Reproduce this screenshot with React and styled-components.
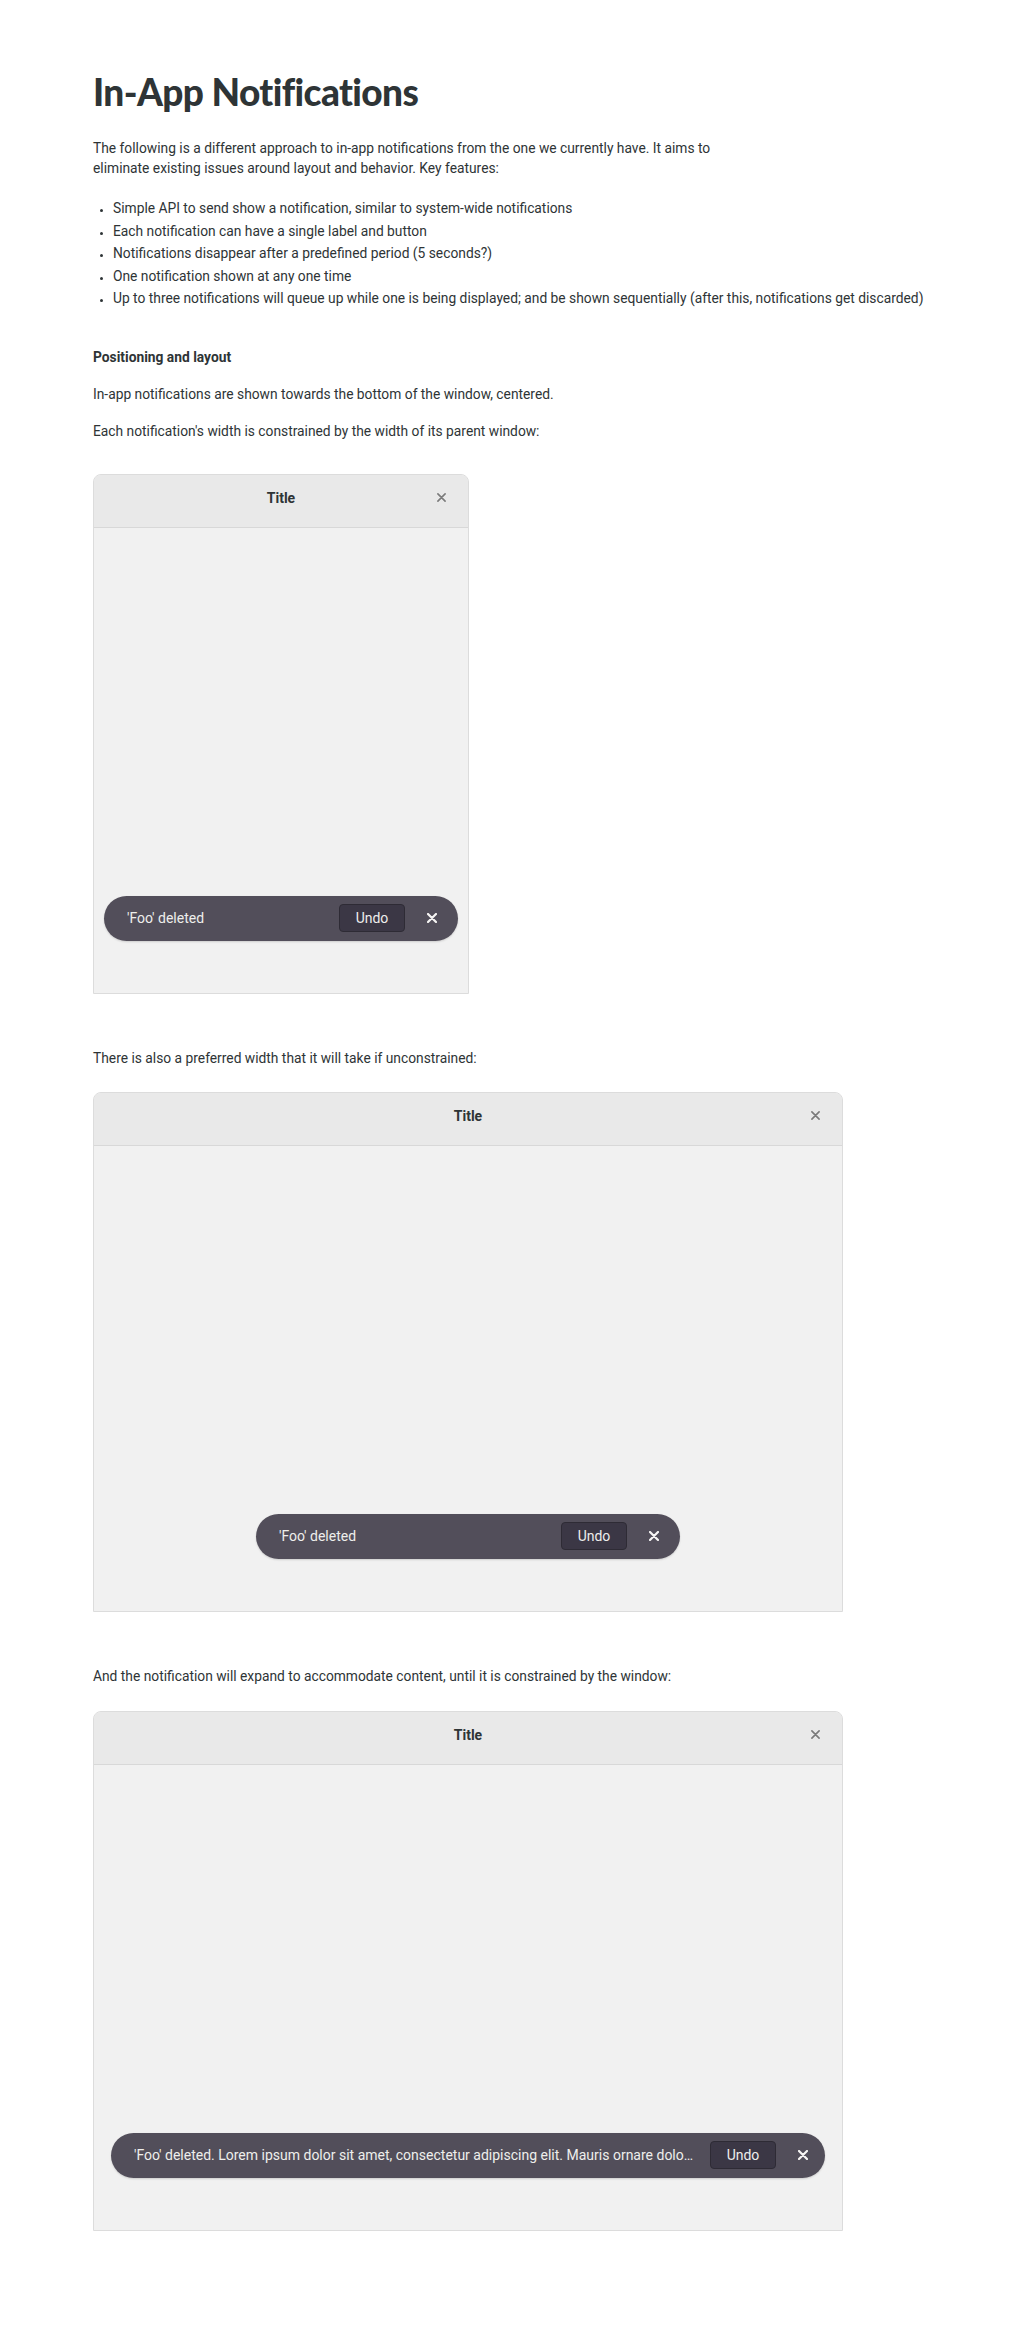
import React from 'react';
import styled, { createGlobalStyle } from 'styled-components';

const GlobalStyle = createGlobalStyle`
  html, body {
    margin: 0;
    padding: 0;
    background: #ffffff;
  }
  body {
    font-family: Roboto, "Liberation Sans", sans-serif;
    color: #2e3436;
  }
`;

const features = [
    'Simple API to send show a notification, similar to system-wide notifications',
    'Each notification can have a single label and button',
    'Notifications disappear after a predefined period (5 seconds?)',
    'One notification shown at any one time',
    'Up to three notifications will queue up while one is being displayed; and be shown sequentially (after this, notifications get discarded)',
];

const CloseIcon = ({ size = 9, color = 'currentColor', stroke = 1.8 }) => (
    <svg width={size} height={size} viewBox="0 0 10 10" fill="none">
        <path d="M1 1 L9 9 M9 1 L1 9" stroke={color} strokeWidth={stroke} strokeLinecap="round" />
    </svg>
);

const Toast = ({ label, width, inset, padRight = 21 }) => (
    <ToastPill $width={width} $inset={inset} $padRight={padRight}>
        <ToastLabel>{label}</ToastLabel>
        <UndoButton>Undo</UndoButton>
        <ToastClose>
            <CloseIcon size={10} color="#f6f5f4" stroke={2.2} />
        </ToastClose>
    </ToastPill>
);

const FakeWindow = ({ width, toast }) => (
    <WindowFrame $width={width}>
        <TitleBar>
            <TitleText>Title</TitleText>
            <TitleClose>
                <CloseIcon size={9} color="#7b7b7b" stroke={1.8} />
            </TitleClose>
        </TitleBar>
        <WindowBody>{toast}</WindowBody>
    </WindowFrame>
);

const App = () => {
    return (
        <Page>
            <GlobalStyle />
            <Heading>In-App Notifications</Heading>

            <Intro>
                The following is a different approach to in-app notifications from the one we currently have. It aims to
                <br />
                eliminate existing issues around layout and behavior. Key features:
            </Intro>

            <FeatureList>
                {features.map((f) => (
                    <FeatureItem key={f}>{f}</FeatureItem>
                ))}
            </FeatureList>

            <SubHeading>Positioning and layout</SubHeading>
            <Text>In-app notifications are shown towards the bottom of the window, centered.</Text>
            <Text>Each notification's width is constrained by the width of its parent window:</Text>

            <Figure $top={33}>
                <FakeWindow width={376} toast={<Toast label="'Foo' deleted" inset={10} />} />
            </Figure>

            <Text $top={0}>There is also a preferred width that it will take if unconstrained:</Text>

            <Figure $top={24}>
                <FakeWindow width={750} toast={<Toast label="'Foo' deleted" width={424} />} />
            </Figure>

            <Text $top={0}>And the notification will expand to accommodate content, until it is constrained by the window:</Text>

            <Figure $top={25} $last>
                <FakeWindow
                    width={750}
                    toast={
                        <Toast
                            label="'Foo' deleted. Lorem ipsum dolor sit amet, consectetur adipiscing elit. Mauris ornare dolor sit amet, consectetur adipiscing"
                            inset={17}
                            padRight={17}
                        />
                    }
                />
            </Figure>
        </Page>
    );
};

export default App;

const Page = styled.div`
    padding: 70px 40px 94px 93px;
    font-size: 13.8px;
    line-height: 20px;
`;

const Heading = styled.h1`
    margin: 0;
    font-family: Lato, "Open Sans", sans-serif;
    font-weight: 900;
    font-size: 37px;
    line-height: 44px;
    letter-spacing: -0.6px;
    color: #2e3436;
`;

const Intro = styled.p`
    margin: 24px 0 0;
`;

const FeatureList = styled.ul`
    margin: 19px 0 0;
    padding-left: 20px;
    list-style: disc;
`;

const FeatureItem = styled.li`
    line-height: 22.5px;
    &::marker {
        font-size: 11px;
    }
`;

const SubHeading = styled.h4`
    margin: 37px 0 0;
    font-size: 13.8px;
    font-weight: 700;
    line-height: 20px;
`;

const Text = styled.p`
    margin: ${(p) => (p.$top ?? 17)}px 0 0;
`;

const Figure = styled.div`
    margin: ${(p) => p.$top}px 0 ${(p) => (p.$last ? '0' : '54px')};
`;

const WindowFrame = styled.div`
    width: ${(p) => p.$width}px;
    height: 520px;
    box-sizing: border-box;
    display: flex;
    flex-direction: column;
    border: 1px solid #dcdcdc;
    border-radius: 8px 8px 0 0;
    background: #f1f1f1;
    overflow: hidden;
`;

const TitleBar = styled.div`
    position: relative;
    height: 53px;
    box-sizing: border-box;
    display: flex;
    align-items: flex-start;
    justify-content: center;
    padding-top: 13px;
    background: #e9e9e9;
    border-bottom: 1px solid #d8d8d8;
    flex-shrink: 0;
`;

const TitleText = styled.span`
    font-size: 14px;
    line-height: 20px;
    font-weight: 700;
    color: #2e3436;
`;

const TitleClose = styled.span`
    position: absolute;
    right: 22px;
    top: 18px;
    display: flex;
`;

const WindowBody = styled.div`
    flex: 1;
    display: flex;
    flex-direction: column;
    justify-content: flex-end;
    align-items: center;
    padding-bottom: 52px;
`;

const ToastPill = styled.div`
    box-sizing: border-box;
    width: ${(p) => (p.$width ? `${p.$width}px` : `calc(100% - ${p.$inset * 2}px)`)};
    height: 45px;
    display: flex;
    align-items: center;
    padding: 0 ${(p) => p.$padRight}px 0 23px;
    border-radius: 23px;
    background: #524e5a;
    color: #eeeeec;
    box-shadow: 0 1px 2px rgba(0, 0, 0, 0.15);
`;

const ToastLabel = styled.span`
    flex: 1;
    min-width: 0;
    white-space: nowrap;
    overflow: hidden;
    text-overflow: ellipsis;
    font-size: 14px;
    margin-right: 14px;
`;

const UndoButton = styled.button`
    flex-shrink: 0;
    width: 66px;
    height: 28px;
    box-sizing: border-box;
    border: 1px solid #2e2b35;
    border-radius: 4px;
    background: #3b3745;
    color: #eeeeec;
    font-family: inherit;
    font-size: 14px;
    padding: 0;
    cursor: pointer;
`;

const ToastClose = styled.span`
    flex-shrink: 0;
    display: flex;
    margin-left: 22px;
`;
